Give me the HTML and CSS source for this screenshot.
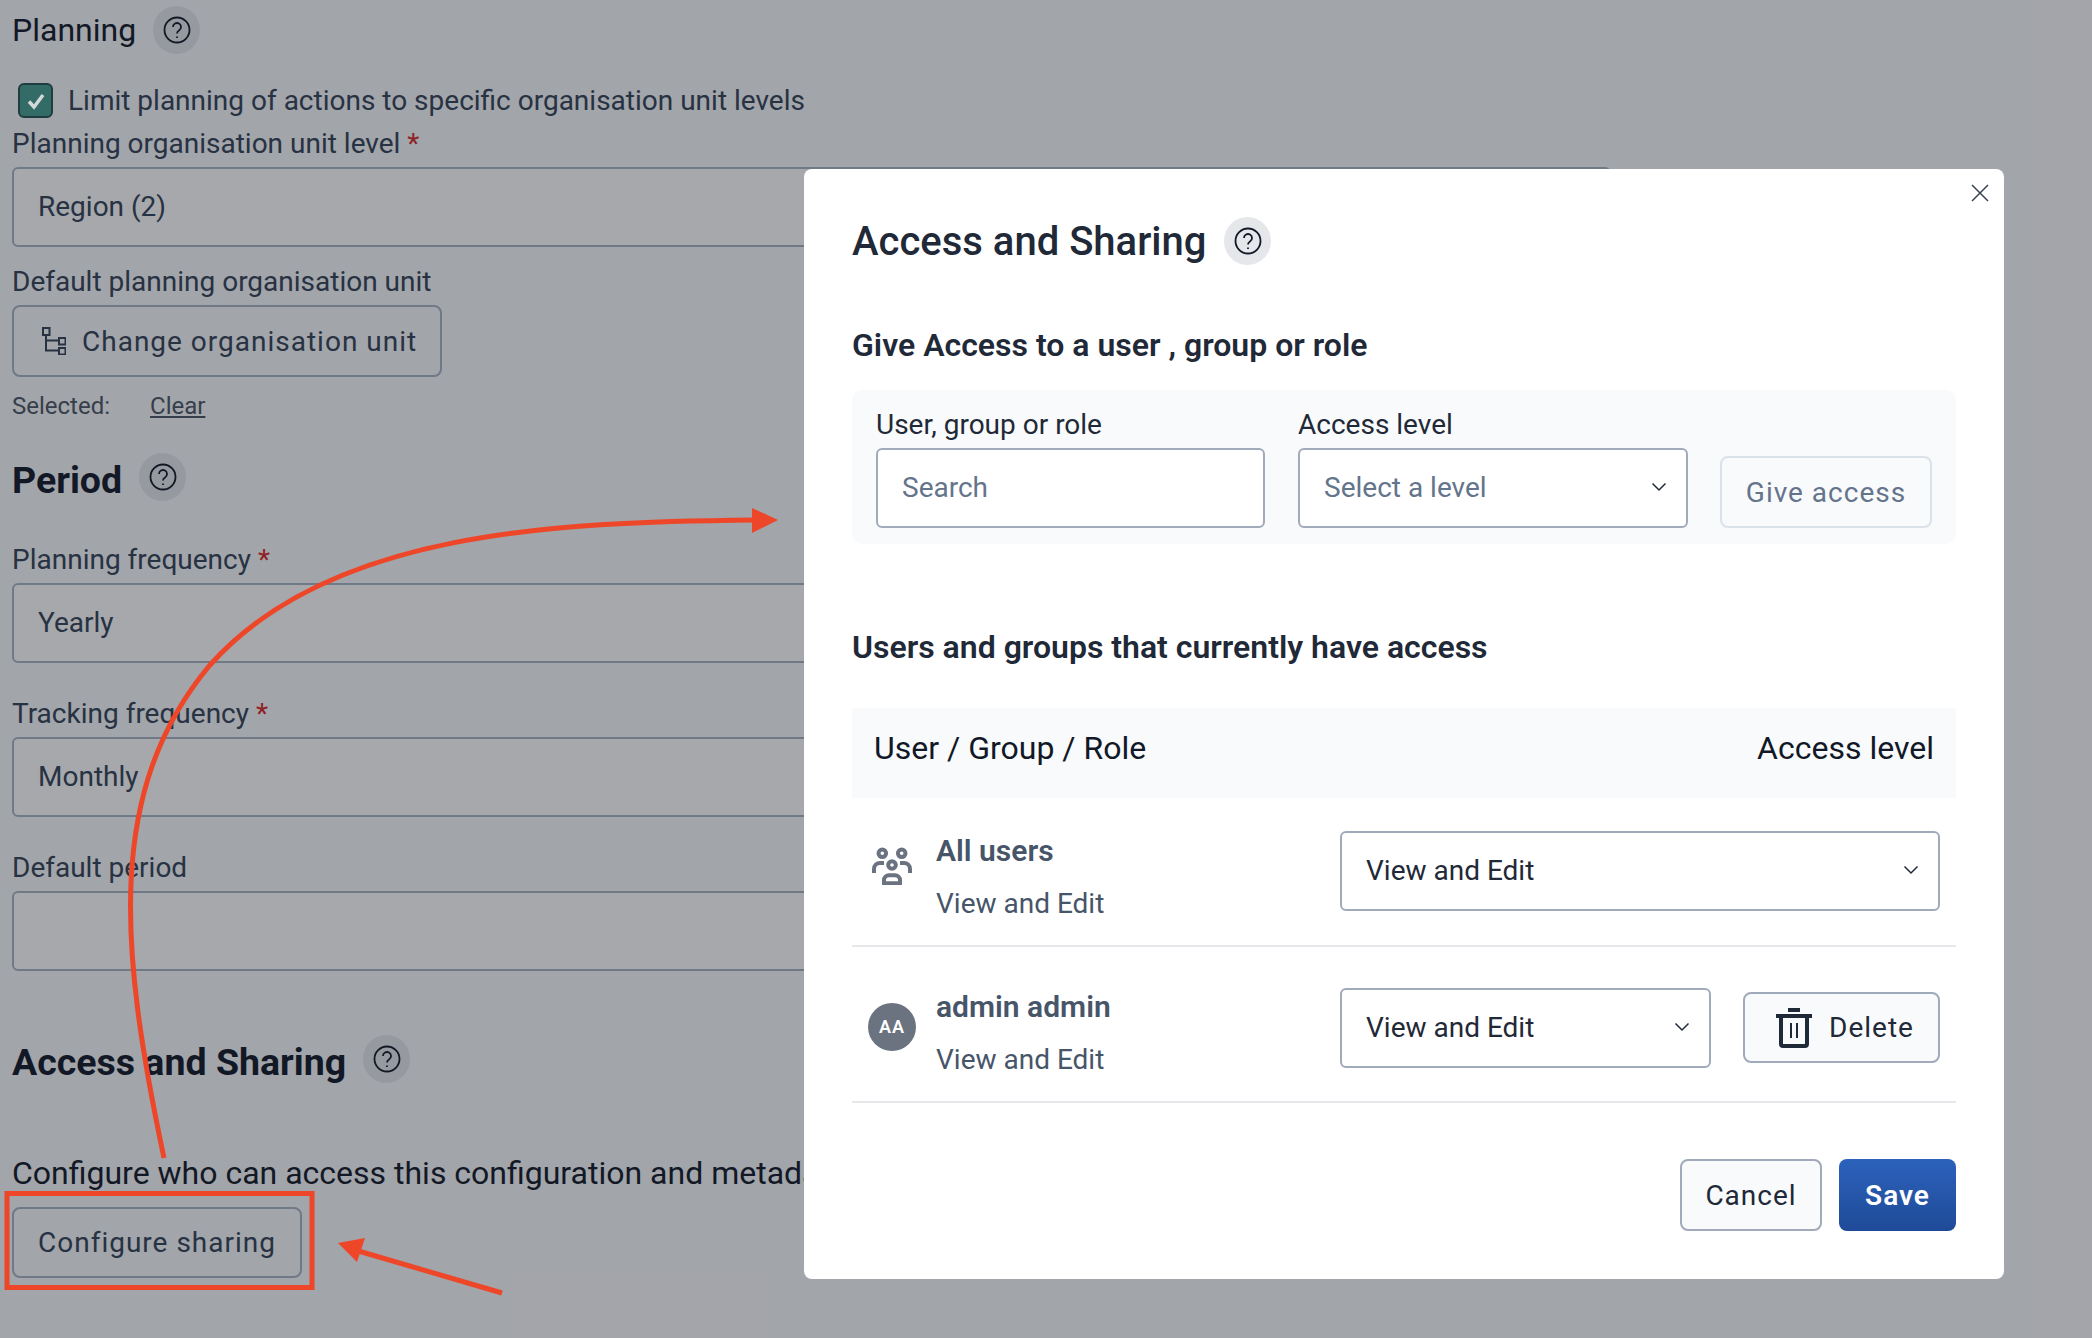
FILE: index.html
```html
<!DOCTYPE html>
<html lang="en">
<head>
    <meta charset="UTF-8">
    <title>Access and Sharing</title>
    <link rel="stylesheet" href="styles.css">
</head>
<body>

    <main class="page">
        <div class="title-row planning-row">
            <span class="planning-title">Planning</span>
            <span class="help"><svg width="28" height="28" viewBox="0 0 28 28"><circle cx="14" cy="14" r="12.500"/><path d="M10 11a4 4 0 1 1 6 3.500c-1.300.8-2 1.500-2 3"/><path d="M14 20.500v1.500"/></svg></span>
        </div>

        <div class="check-row">
            <span class="checkbox"><svg width="22" height="22" viewBox="0 0 22 22"><path d="M4 11.500l5 5.500L18 5"/></svg></span>
            <span class="check-label">Limit planning of actions to specific organisation unit levels</span>
        </div>

        <div class="label first-label">Planning organisation unit level <span class="req">*</span></div>
        <div class="field">Region (2)</div>

        <div class="label after-field">Default planning organisation unit</div>
        <button class="btn org-btn" type="button">
            <svg width="24" height="28" viewBox="0 0 24 28"><path d="M1 1h6.500v7H1zM17 11h6.500v6.500H17zM17 21h6.500v6.500H17zM4 8v15.500h13M4 13.500h13"/></svg>
            Change organisation unit
        </button>
        <div class="selected-row"><span>Selected:</span><a class="clear-link">Clear</a></div>

        <div class="title-row period-row">
            <h2 class="section-title">Period</h2>
            <span class="help"><svg width="28" height="28" viewBox="0 0 28 28"><circle cx="14" cy="14" r="12.500"/><path d="M10 11a4 4 0 1 1 6 3.500c-1.300.8-2 1.500-2 3"/><path d="M14 20.500v1.500"/></svg></span>
        </div>

        <div class="label freq-label">Planning frequency <span class="req">*</span></div>
        <div class="field">Yearly</div>
        <div class="label next-label">Tracking frequency <span class="req">*</span></div>
        <div class="field">Monthly</div>
        <div class="label next-label">Default period</div>
        <div class="field"></div>

        <div class="title-row access-row">
            <h2 class="section-title">Access and Sharing</h2>
            <span class="help"><svg width="28" height="28" viewBox="0 0 28 28"><circle cx="14" cy="14" r="12.500"/><path d="M10 11a4 4 0 1 1 6 3.500c-1.300.8-2 1.500-2 3"/><path d="M14 20.500v1.500"/></svg></span>
        </div>

        <p class="access-text">Configure who can access this configuration and metadata</p>
        <button class="btn share-btn" type="button">Configure sharing</button>
    </main>

    <div class="scrim"></div>

    <!-- annotation drawn over the screenshot -->
    <svg class="marks" width="2092" height="1338" viewBox="0 0 2092 1338">
        <rect x="7" y="1193.500" width="305" height="94" fill="none" stroke="#ee4628" stroke-width="5"/>
        <path d="M164 1158C120 950 105 790 210 665C330 530 560 522 755 520" fill="none" stroke="#ee4628" stroke-width="5"/>
        <path d="M778 520L752 508V533Z" fill="#ee4628"/>
        <path d="M502 1293L355 1250" fill="none" stroke="#ee4628" stroke-width="5"/>
        <path d="M338 1243L365 1238L357 1262Z" fill="#ee4628"/>
    </svg>

    <section class="modal">
        <button class="close" type="button"><svg width="20" height="20" viewBox="0 0 20 20"><path d="M2 2l16 16M18 2L2 18"/></svg></button>

        <div class="title-row">
            <h1 class="modal-title">Access and Sharing</h1>
            <span class="help help-light"><svg width="28" height="28" viewBox="0 0 28 28"><circle cx="14" cy="14" r="12.500"/><path d="M10 11a4 4 0 1 1 6 3.500c-1.300.8-2 1.500-2 3"/><path d="M14 20.500v1.500"/></svg></span>
        </div>

        <h3 class="sub-title give-title">Give Access to a user , group or role</h3>

        <div class="give-panel">
            <div class="give-col">
                <div class="give-label">User, group or role</div>
                <input class="box search" type="text" placeholder="Search">
            </div>
            <div class="give-col">
                <div class="give-label">Access level</div>
                <div class="box select level muted">Select a level
                    <svg class="chev" width="16" height="10" viewBox="0 0 16 10"><path d="M1.500 1.500L8 8l6.500-6.500"/></svg>
                </div>
            </div>
            <button class="btn give-btn" type="button">Give access</button>
        </div>

        <h3 class="sub-title users-title">Users and groups that currently have access</h3>

        <div class="table-head"><span>User / Group / Role</span><span>Access level</span></div>

        <div class="row row-one">
            <div class="row-icon users-icon">
                <svg width="40" height="40" viewBox="0 0 40 40"><circle cx="10.300" cy="8.300" r="3.800"/><circle cx="29.700" cy="8.300" r="3.800"/><circle cx="20" cy="20" r="3.800"/><path d="M2 28v-4a6 6 0 0 1 6-6h4M38 28v-4a6 6 0 0 0-6-6h-4M12 38.300v-3a5 5 0 0 1 5-5h6a5 5 0 0 1 5 5v3z"/></svg>
            </div>
            <div class="row-text">
                <div class="row-name">All users</div>
                <div class="row-sub">View and Edit</div>
            </div>
            <div class="box select wide">View and Edit
                <svg class="chev" width="16" height="10" viewBox="0 0 16 10"><path d="M1.500 1.500L8 8l6.500-6.500"/></svg>
            </div>
        </div>

        <div class="row row-two">
            <div class="row-icon avatar">AA</div>
            <div class="row-text">
                <div class="row-name">admin admin</div>
                <div class="row-sub">View and Edit</div>
            </div>
            <div class="box select narrow">View and Edit
                <svg class="chev" width="16" height="10" viewBox="0 0 16 10"><path d="M1.500 1.500L8 8l6.500-6.500"/></svg>
            </div>
            <button class="btn delete-btn" type="button">
                <svg width="36" height="40" viewBox="0 0 36 40"><path class="lid" d="M12 2h12M0 8h36"/><path class="bin" d="M5 8v28a2 2 0 0 0 2 2h22a2 2 0 0 0 2-2V8"/><path class="bars" d="M15 15v15M21 15v15"/></svg>
                Delete
            </button>
        </div>

        <div class="modal-foot">
            <button class="btn cancel-btn" type="button">Cancel</button>
            <button class="btn save-btn" type="button">Save</button>
        </div>
    </section>

</body>
</html>
```

FILE: styles.css
```css
body {
    margin: 0;
    width: 2092px;
    height: 1338px;
    overflow: hidden;
    position: relative;
    background-color: #f9fafb;
    font-family: Roboto, "Liberation Sans", sans-serif;
    font-size: 28px;
    color: #1f2937;
}
.page {
    width: 1599px;
    padding: 6px 0 0 12px;
    color: #334155;
}
.title-row {
    display: flex;
    align-items: center;
    height: 48px;
}
.help {
    display: flex;
    align-items: center;
    justify-content: center;
    width: 47px;
    height: 48px;
    margin-left: 17px;
    border-radius: 50%;
    background-color: #e5e7eb;
}
.help svg {
    fill: none;
    stroke: #111827;
    stroke-width: 1.800;
}
.help-light {
    margin-left: 18px;
}
.planning-title {
    font-size: 32px;
    color: #111827;
}
.check-row {
    display: flex;
    align-items: center;
    height: 35px;
    margin: 29px 0 0 6px;
}
/* sits above the scrim, its tick stays bright in the screenshot */
.checkbox {
    position: relative;
    z-index: 1;
    display: flex;
    align-items: center;
    justify-content: center;
    width: 31px;
    height: 31px;
    border: 2px solid #1f3d40;
    border-radius: 6px;
    background-color: #336b66;
}
.checkbox svg {
    fill: none;
    stroke: #d3d9d7;
    stroke-width: 3.500;
}
.check-label {
    margin-left: 15px;
}
.label {
    height: 34px;
    line-height: 36px;
}
.first-label {
    margin-top: 8px;
}
.after-field {
    margin-top: 17px;
}
.freq-label {
    margin-top: 41px;
}
.next-label {
    margin-top: 33px;
}
.req {
    color: #dc2626;
}
.field {
    box-sizing: border-box;
    height: 80px;
    margin-top: 7px;
    padding: 0 24px;
    line-height: 76px;
    border: 2px solid #a8b3c2;
    border-radius: 6px;
    background-color: #fff;
}
.btn {
    box-sizing: border-box;
    font-family: inherit;
    font-size: 28px;
    letter-spacing: 1px;
    color: #1f2937;
    border: 2px solid #a0aaba;
    border-radius: 8px;
    background-color: #f9fafb;
}
.org-btn {
    display: flex;
    align-items: center;
    gap: 16px;
    width: 430px;
    height: 72px;
    margin-top: 7px;
    padding: 0 0 0 28px;
    border-color: #a8b3c2;
    color: #334155;
}
.org-btn svg {
    fill: none;
    stroke: #334155;
    stroke-width: 2;
}
.selected-row {
    display: flex;
    gap: 40px;
    height: 28px;
    margin-top: 15px;
    line-height: 28px;
    font-size: 24px;
    color: #4b5563;
}
.clear-link {
    text-decoration: underline;
}
.period-row {
    margin-top: 33px;
}
.access-row {
    margin-top: 64px;
}
.section-title {
    margin: 0;
    padding-top: 6px;
    font-size: 37.500px;
    font-weight: 700;
    color: #111827;
}
.access-text {
    height: 40px;
    margin: 70px 0 0;
    line-height: 40px;
    font-size: 32px;
    white-space: nowrap;
    color: #111827;
}
.share-btn {
    display: block;
    width: 290px;
    height: 71px;
    margin-top: 14px;
    border-color: #a8b3c2;
    color: #334155;
}
.scrim {
    position: absolute;
    inset: 0;
    background-color: rgba(22, 26, 38, 0.38);
}
.marks {
    position: absolute;
    left: 0;
    top: 0;
}
.modal {
    position: absolute;
    left: 804px;
    top: 169px;
    box-sizing: border-box;
    width: 1200px;
    height: 1110px;
    padding: 48px 48px 0;
    border-radius: 8px;
    background-color: #fff;
}
.close {
    position: absolute;
    right: 14px;
    top: 14px;
    padding: 0;
    border: none;
    background: none;
}
.close svg {
    display: block;
    fill: none;
    stroke: #374151;
    stroke-width: 1.500;
}
.modal-title {
    margin: 0;
    font-size: 40px;
    font-weight: 500;
    color: #1f2937;
}
.sub-title {
    height: 40px;
    line-height: 40px;
    font-size: 32px;
    font-weight: 600;
    color: #1f2937;
}
.give-title {
    margin: 60px 0 0;
}
.users-title {
    margin: 83px 0 0;
}
.give-panel {
    display: flex;
    align-items: flex-end;
    gap: 33px;
    box-sizing: border-box;
    height: 154px;
    margin-top: 25px;
    padding: 0 23px 16px 24px;
    border-radius: 10px;
    background-color: #f9fafb;
}
.give-label {
    height: 36px;
    line-height: 38px;
    margin-bottom: 6px;
}
.box {
    box-sizing: border-box;
    display: block;
    width: 389px;
    height: 80px;
    padding: 0 24px 2px;
    font-family: inherit;
    font-size: 28px;
    color: #1f2937;
    border: 2px solid #a0aaba;
    border-radius: 6px;
    background-color: #fff;
}
.level {
    width: 390px;
}
.search::placeholder,
.muted {
    color: #64748b;
    opacity: 1;
}
.select {
    display: flex;
    align-items: center;
    justify-content: space-between;
}
.chev {
    fill: none;
    stroke: #1f2937;
    stroke-width: 1.500;
    margin-right: -5px;
}
.give-btn {
    width: 212px;
    height: 72px;
    margin-left: -1px;
    color: #64748b;
    border-color: #dbe2ea;
}
.table-head {
    display: flex;
    align-items: center;
    justify-content: space-between;
    box-sizing: border-box;
    height: 90px;
    margin-top: 41px;
    padding: 0 22px 10px;
    font-size: 32px;
    color: #111827;
    background-color: #f9fafb;
}
.row {
    display: flex;
    align-items: flex-start;
    box-sizing: border-box;
    padding-left: 16px;
    padding-right: 16px;
    border-bottom: 2px solid #e5e7eb;
}
.row-one {
    height: 149px;
    padding-top: 33px;
}
.row-two {
    height: 156px;
    padding-top: 41px;
}
.row-icon {
    width: 48px;
    flex-shrink: 0;
    display: flex;
    justify-content: center;
}
.users-icon {
    margin-top: 14px;
}
.users-icon svg {
    fill: none;
    stroke: #6b7280;
    stroke-width: 4;
}
.avatar {
    height: 48px;
    margin-top: 15px;
    line-height: 48px;
    font-size: 18px;
    font-weight: 600;
    letter-spacing: 1px;
    color: #fff;
    border-radius: 50%;
    background-color: #6b7280;
}
.row-text {
    flex: 1;
    margin: 2px 0 0 20px;
}
.row-two .row-text {
    margin-top: 1px;
}
.row-name {
    height: 36px;
    line-height: 36px;
    font-size: 30px;
    font-weight: 600;
    color: #475569;
}
.row-sub {
    height: 36px;
    margin-top: 17px;
    line-height: 36px;
    color: #475569;
}
.wide {
    width: 600px;
}
.narrow {
    width: 371px;
}
.row .select {
    flex-shrink: 0;
}
.delete-btn {
    display: flex;
    align-items: center;
    gap: 17px;
    width: 197px;
    height: 71px;
    margin: 4px 0 0 32px;
    padding: 0 0 0 31px;
}
.delete-btn svg {
    fill: none;
    stroke: #1f2937;
}
.lid {
    stroke-width: 4;
}
.bin {
    stroke-width: 4;
}
.bars {
    stroke-width: 2;
}
.modal-foot {
    display: flex;
    justify-content: flex-end;
    gap: 17px;
    margin-top: 56px;
}
.cancel-btn {
    width: 142px;
    height: 72px;
}
.save-btn {
    width: 117px;
    height: 72px;
    font-weight: 600;
    color: #fff;
    border: none;
    background: linear-gradient(#2c62bb, #1f4a98);
}
```
